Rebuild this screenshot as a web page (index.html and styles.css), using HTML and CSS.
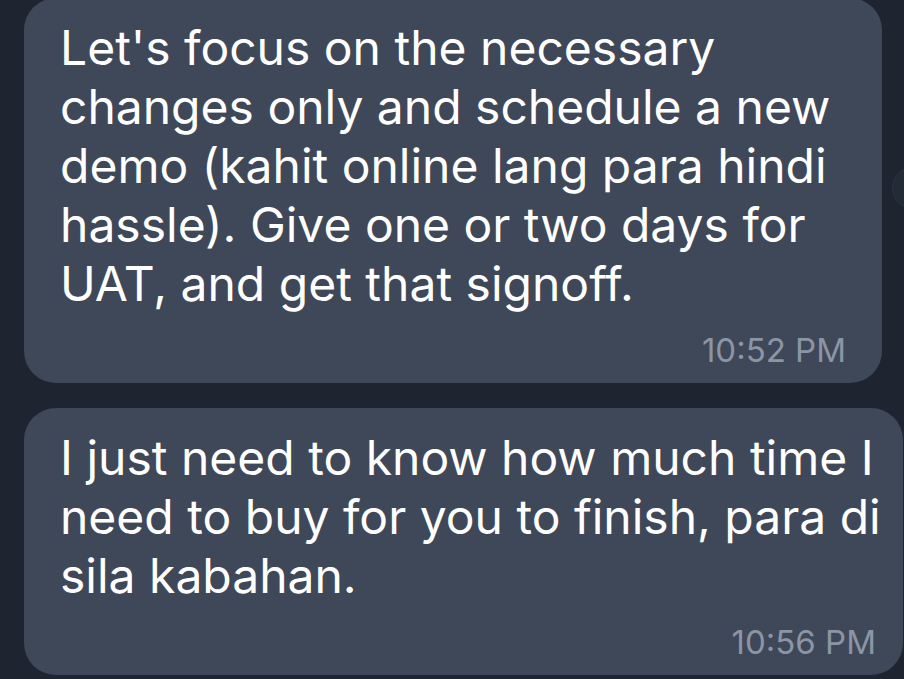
FILE: index.html
```html
<!DOCTYPE html>
<html lang="en">
<head>
<meta charset="utf-8">
<title>Chat</title>
<link rel="stylesheet" href="styles.css">
</head>
<body>
<main class="chat">
  <div class="bubble bubble-first">
    <p class="text">Let's focus on the necessary<br>changes only and schedule a new<br>demo (kahit online lang para hindi<br>hassle). Give one or two days for<br>UAT, and get that signoff.</p>
    <div class="time">10:52 PM</div>
  </div>
  <div class="bubble bubble-wide">
    <p class="text">I just need to know how much time I<br>need to buy for you to finish, para di<br>sila kabahan.</p>
    <div class="time">10:56 PM</div>
  </div>
  <div class="edge-button"></div>
</main>
</body>
</html>
```

FILE: styles.css
```css
html, body {
  margin: 0;
  padding: 0;
  height: 100%;
  overflow: hidden;
}
body {
  background: #1e2530;
  font-family: Inter, "Liberation Sans", sans-serif;
  color: #ffffff;
}
.chat {
  position: relative;
  display: flex;
  flex-direction: column;
  gap: 25px;
  padding: 0 0 0 24px;
}
.bubble {
  background: #3f4858;
  border-radius: 32px;
  padding: 20px 36px 13px 36px;
  width: 858px;
  box-sizing: border-box;
}
.bubble-first {
  margin-top: -2px;
}
.bubble-wide {
  width: 879px;
  padding-right: 27px;
}
.text {
  margin: 0;
  font-size: 48px;
  line-height: 59px;
  letter-spacing: 0;
  white-space: nowrap;
}
.time {
  margin-top: 17px;
  font-size: 33px;
  line-height: 40px;
  color: #8b95a5;
  text-align: right;
}
.edge-button {
  position: absolute;
  top: 168px;
  left: 893px;
  width: 40px;
  height: 40px;
  border-radius: 50%;
  background: #232b37;
  box-shadow: 0 0 0 1px #2b3441;
}
```
